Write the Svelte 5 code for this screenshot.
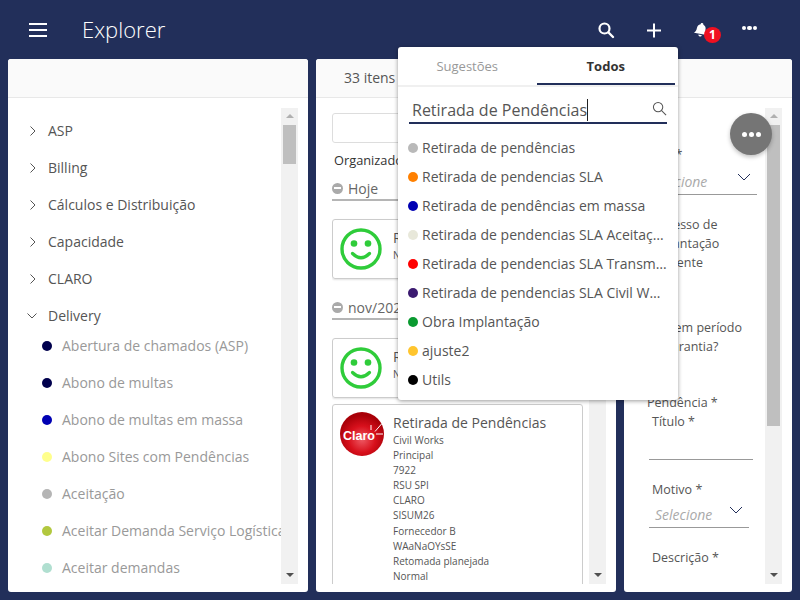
<script>
	const groups = ['ASP', 'Billing', 'Cálculos e Distribuição', 'Capacidade', 'CLARO'];
	const delivery = [
		{ name: 'Abertura de chamados (ASP)', color: '#00004d' },
		{ name: 'Abono de multas', color: '#00004d' },
		{ name: 'Abono de multas em massa', color: '#0000b3' },
		{ name: 'Abono Sites com Pendências', color: '#ffff8c' },
		{ name: 'Aceitação', color: '#b5b5b5' },
		{ name: 'Aceitar Demanda Serviço Logística', color: '#b2c83f' },
		{ name: 'Aceitar demandas', color: '#b0dfd0' }
	];
	const results = [
		{ name: 'Retirada de pendências', color: '#b9b9b9' },
		{ name: 'Retirada de pendencias SLA', color: '#ff8000' },
		{ name: 'Retirada de pendências em massa', color: '#0000b3' },
		{ name: 'Retirada de pendencias SLA Aceitação', color: '#e8e8da' },
		{ name: 'Retirada de pendencias SLA Transmissão', color: '#ff0000' },
		{ name: 'Retirada de pendencias SLA Civil Works', color: '#3b1a70' },
		{ name: 'Obra Implantação', color: '#0a9a30' },
		{ name: 'ajuste2', color: '#ffc52e' },
		{ name: 'Utils', color: '#000000' }
	];
	const details = ['Civil Works', 'Principal', '7922', 'RSU SPI', 'CLARO', 'SISUM26', 'Fornecedor B', 'WAaNaOYsSE', 'Retomada planejada', 'Normal'];
</script>

{#snippet scrollbar(thumb)}
	<div class="scrollbar">
		<div class="arrow up"></div>
		<div class="thumb" style="height: {thumb}px"></div>
		<div class="arrow down"></div>
	</div>
{/snippet}

{#snippet smiley()}
	<svg class="avatar" viewBox="0 0 42 42" width="42" height="42">
		<circle cx="21" cy="21" r="19" fill="none" stroke="#2fcc3a" stroke-width="3.4" />
		<circle cx="14" cy="15.5" r="3.3" fill="#2fcc3a" />
		<circle cx="28" cy="15.5" r="3.3" fill="#2fcc3a" />
		<path d="M12.5 25.5 Q21 34 29.5 25.5" fill="none" stroke="#2fcc3a" stroke-width="3.2" stroke-linecap="round" />
	</svg>
{/snippet}

{#snippet chevron()}
	<svg class="chevron" viewBox="0 0 14 8" width="14" height="8">
		<path d="M1 1 L7 7 L13 1" fill="none" stroke="#222f5a" stroke-width="1" />
	</svg>
{/snippet}

<div class="app">
	<header class="topbar">
		<button class="menu" aria-label="Menu">
			<span></span><span></span><span></span>
		</button>
		<h1>Explorer</h1>
		<div class="actions">
			<svg viewBox="0 0 18 18" width="18" height="18">
				<circle cx="7.5" cy="7.5" r="5" fill="none" stroke="#fff" stroke-width="2.2" />
				<path d="M11.5 11.5 L16 16" stroke="#fff" stroke-width="2.4" stroke-linecap="round" />
			</svg>
			<svg viewBox="0 0 18 18" width="18" height="18">
				<path d="M9 2.5 V16.5 M2 9.5 H16" stroke="#fff" stroke-width="2" />
			</svg>
			<div class="bell">
				<svg class="bell-icon" viewBox="0 0 16 18" width="14" height="16">
					<path d="M8 1 C9 1 9.6 1.7 9.6 2.5 C12 3.2 13 5.2 13 7.5 C13 10.5 14 12 15.4 13.4 L0.6 13.4 C2 12 3 10.5 3 7.5 C3 5.2 4 3.2 6.4 2.5 C6.4 1.7 7 1 8 1 Z M6 14.6 H10 C10 15.8 9 16.6 8 16.6 C7 16.6 6 15.8 6 14.6 Z" fill="#fff" />
				</svg>
				<span class="badge">1</span>
			</div>
			<div class="dots"><i></i><i></i><i></i></div>
		</div>
	</header>

	<main class="panels">
		<section class="panel left">
			<div class="panel-head"></div>
			<div class="panel-body">
				<div class="tree">
					{#each groups as group}
						<div class="group">
							<svg viewBox="0 0 8 12" width="8" height="12"><path d="M1.5 1.5 L6 6 L1.5 10.5" fill="none" stroke="#555" /></svg>
							{group}
						</div>
					{/each}
					<div class="group open">
						<svg viewBox="0 0 12 8" width="12" height="8"><path d="M1.5 1.5 L6 6 L10.5 1.5" fill="none" stroke="#555" /></svg>
						Delivery
					</div>
					{#each delivery as item}
						<div class="leaf">
							<span class="dot" style="background: {item.color}"></span>
							{item.name}
						</div>
					{/each}
				</div>
				{@render scrollbar(39)}
			</div>
		</section>

		<section class="panel middle">
			<div class="panel-head count">33 itens</div>
			<div class="panel-body">
				<div class="list">
					<div class="filter"></div>
					<div class="sort">Organizado por data</div>
					<div class="date-head"><span class="minus"></span>Hoje</div>
					<article class="card short">
						{@render smiley()}
						<div class="card-text">
							<div class="title">Retirada de Pendências</div>
							<div class="line">Normal</div>
						</div>
					</article>
					<div class="date-head later"><span class="minus"></span>nov/2021</div>
					<article class="card short">
						{@render smiley()}
						<div class="card-text">
							<div class="title">Retirada de Pendências</div>
							<div class="line">Normal</div>
						</div>
					</article>
					<article class="card tall">
						<svg class="avatar" viewBox="0 0 44 44" width="44" height="44">
							<defs>
								<radialGradient id="claro" cx="50%" cy="62%" r="55%">
									<stop offset="0%" stop-color="#ee5a64" />
									<stop offset="55%" stop-color="#d8101c" />
									<stop offset="100%" stop-color="#a80008" />
								</radialGradient>
							</defs>
							<circle cx="22" cy="22" r="22" fill="url(#claro)" />
							<text x="3" y="27.5" class="claro">Claro</text>
							<path d="M31 13 V18 M41.5 12 L35 19.5 M36 22 H43" stroke="#fff" stroke-width="1" fill="none" />
						</svg>
						<div class="card-text">
							<div class="title">Retirada de Pendências</div>
							{#each details as line}
								<div class="line">{line}</div>
							{/each}
						</div>
					</article>
				</div>
				{@render scrollbar(0)}
			</div>
		</section>

		<section class="panel right">
			<div class="panel-head"></div>
			<div class="panel-body">
				<form class="form">
					<div class="label first">Tipo *</div>
					<div class="select wide"><em>Selecione</em>{@render chevron()}</div>
					<div class="label multi">Processo de<br />Implantação<br />Pendente</div>
					<div class="label warranty">Está em período<br />de garantia?</div>
					<div class="label pend">Pendência *</div>
					<div class="nested">
						<div class="label">Título *</div>
						<div class="input"></div>
						<div class="label motivo">Motivo *</div>
						<div class="select"><em>Selecione</em>{@render chevron()}</div>
						<div class="label descr">Descrição *</div>
					</div>
				</form>
				{@render scrollbar(301)}
			</div>
		</section>
	</main>

	<div class="popover">
		<div class="tabs">
			<div class="tab">Sugestões</div>
			<div class="tab active">Todos</div>
		</div>
		<div class="search">
			<span class="query">Retirada de Pendências</span>
			<svg viewBox="0 0 16 16" width="15" height="15">
				<circle cx="6.5" cy="6.5" r="5" fill="none" stroke="#555" stroke-width="1.1" />
				<path d="M10 10 L15 15" stroke="#555" stroke-width="1.1" />
			</svg>
		</div>
		<ul class="results">
			{#each results as item}
				<li>
					<span class="dot" style="background: {item.color}"></span>
					<span class="result-name">{item.name}</span>
				</li>
			{/each}
		</ul>
	</div>

	<button class="fab" aria-label="Mais opções">
		<span class="dots"><i></i><i></i><i></i></span>
	</button>
</div>

<style>
	:global(body) {
		margin: 0;
		background: #222f5a;
		font-family: 'Open Sans', sans-serif;
	}

	.app {
		position: relative;
		width: 800px;
		height: 600px;
		overflow: hidden;
		display: flex;
		flex-direction: column;
		background: #222f5a;
	}

	.topbar {
		height: 59px;
		flex: none;
		display: flex;
		align-items: center;
		padding-left: 29px;
		color: #fff;
	}

	.menu {
		width: 18px;
		display: flex;
		flex-direction: column;
		gap: 4px;
		padding: 0;
		background: none;
		border: none;
	}

	.menu span {
		display: block;
		height: 2px;
		background: #fff;
	}

	h1 {
		margin: 0 0 2px 35px;
		font-size: 22px;
		font-weight: 300;
		line-height: 1;
	}

	.actions {
		margin-left: auto;
		padding-right: 43px;
		display: flex;
		align-items: center;
		gap: 30px;
	}

	.bell {
		position: relative;
		display: flex;
		margin: 0 4px 0 1px;
	}

	.bell-icon {
		transform: rotate(10deg);
	}

	.badge {
		position: absolute;
		left: 10px;
		top: 5px;
		width: 17px;
		height: 16px;
		border-radius: 50%;
		background: #f01020;
		color: #fff;
		font-size: 12px;
		font-weight: 700;
		line-height: 16px;
		text-align: center;
	}

	.dots {
		display: flex;
		gap: 1px;
	}

	.dots i {
		width: 4.4px;
		height: 4.4px;
		border-radius: 50%;
		background: #fff;
	}

	.actions .dots {
		margin-top: -3px;
	}

	.panels {
		flex: 1;
		min-height: 0;
		display: flex;
		gap: 8px;
		padding: 0 8px 8px;
	}

	.panel {
		width: 300px;
		background: #fff;
		border-radius: 3px;
		display: flex;
		flex-direction: column;
		overflow: hidden;
	}

	.panel.right {
		width: 168px;
	}

	.panel-head {
		height: 38px;
		flex: none;
		background: #fafafa;
		border-bottom: 1px solid #e8e8e8;
	}

	.count {
		padding-left: 28px;
		font-size: 14px;
		line-height: 37px;
		color: #555;
	}

	.panel-body {
		flex: 1;
		min-height: 0;
		display: flex;
		justify-content: space-between;
		padding: 10px 10px 8px 16px;
	}

	.scrollbar {
		width: 17px;
		flex: none;
		display: flex;
		flex-direction: column;
		align-items: center;
		background: #f1f1f1;
		position: relative;
	}

	.arrow {
		width: 0;
		height: 0;
		border-left: 4px solid transparent;
		border-right: 4px solid transparent;
	}

	.arrow.up {
		margin: 6px 0 7px;
		border-bottom: 4px solid #b0b0b0;
	}

	.arrow.down {
		position: absolute;
		bottom: 7px;
		border-top: 4px solid #505050;
	}

	.thumb {
		width: 13px;
		background: #bfbfbf;
		flex: none;
	}

	.tree {
		flex: 1;
		min-width: 0;
		overflow: hidden;
		white-space: nowrap;
		padding-top: 4px;
		font-size: 14px;
	}

	.group {
		height: 37px;
		display: flex;
		align-items: center;
		gap: 11px;
		padding-left: 5px;
		color: #555;
	}

	.group.open {
		padding-left: 2px;
		gap: 10px;
		height: 23px;
		margin-top: 7px;
	}

	.leaf {
		height: 37px;
		display: flex;
		align-items: center;
		gap: 10px;
		padding-left: 18px;
		color: #999;
	}

	.dot {
		width: 10px;
		height: 10px;
		border-radius: 50%;
		flex: none;
	}

	.list {
		width: 251px;
		flex: none;
		overflow: hidden;
		font-size: 14px;
		color: #555;
	}

	.filter {
		height: 28px;
		margin-top: 5px;
		border: 1px solid #ddd;
		border-radius: 3px;
	}

	.sort {
		margin-top: 10px;
		padding-left: 2px;
		font-size: 12.8px;
		line-height: 15px;
		color: #333;
	}

	.date-head {
		margin-top: 9px;
		height: 22px;
		display: flex;
		align-items: center;
		gap: 5px;
		border-bottom: 2px solid #b5b5b5;
		color: #666;
	}

	.date-head.later {
		margin-top: 17px;
	}

	.minus {
		width: 11px;
		height: 11px;
		border-radius: 50%;
		background: #aaa;
		position: relative;
	}

	.minus::after {
		content: '';
		position: absolute;
		left: 2px;
		right: 2px;
		top: 4.5px;
		height: 2px;
		background: #fff;
	}

	.card {
		box-sizing: border-box;
		margin-top: 18px;
		display: flex;
		gap: 11px;
		padding: 8px 7px;
		border: 1px solid #ccc;
		border-radius: 3px;
		box-shadow: 0 1px 2px rgba(0, 0, 0, 0.12);
	}

	.card.short {
		height: 60px;
	}

	.card.tall {
		margin-top: 6px;
		height: 240px;
		gap: 9px;
	}

	.card.tall .avatar {
		margin-top: -1px;
	}

	.avatar {
		flex: none;
	}

	.claro {
		font-family: 'Liberation Sans', sans-serif;
		font-size: 12.5px;
		font-weight: 700;
		fill: #fff;
	}

	.card-text {
		min-width: 0;
		white-space: nowrap;
	}

	.title {
		font-size: 14px;
		line-height: 20px;
		color: #555;
	}

	.line {
		font-size: 10px;
		line-height: 15.1px;
		color: #555;
	}

	.form {
		flex: 1;
		min-width: 0;
		padding-left: 7px;
		font-size: 12.5px;
		color: #555;
		white-space: nowrap;
	}

	.label {
		line-height: 19px;
	}

	.label.first {
		margin-top: 37px;
	}

	.select {
		box-sizing: border-box;
		width: 100px;
		height: 29px;
		margin-left: -3px;
		display: flex;
		align-items: flex-end;
		border-bottom: 1px solid #999;
		padding: 0 6px 3px;
		font-size: 14px;
		position: relative;
	}

	.select.wide {
		width: 110px;
		height: 31px;
		margin-left: 0;
		padding-left: 3px;
	}

	.select em {
		color: #aaa;
	}

	.chevron {
		position: absolute;
		right: 6px;
		top: 7px;
	}

	.select.wide .chevron {
		top: 9px;
	}

	.label.multi {
		margin-top: 20px;
	}

	.label.warranty {
		margin-top: 46px;
	}

	.label.pend {
		margin-top: 37px;
	}

	.nested {
		padding-left: 5px;
	}

	.input {
		box-sizing: border-box;
		width: 104px;
		height: 29px;
		margin-left: -3px;
		border-bottom: 1px solid #999;
	}

	.label.motivo {
		margin-top: 20px;
	}

	.label.descr {
		margin-top: 20px;
	}

	.popover {
		position: absolute;
		left: 398px;
		top: 47px;
		width: 280px;
		height: 353px;
		background: #fff;
		border-radius: 3px;
		box-shadow: 0 1px 4px rgba(0, 0, 0, 0.4);
	}

	.tabs {
		display: flex;
		height: 38px;
		padding-right: 3px;
		border-bottom: 2px solid #f0f0f0;
	}

	.tab {
		flex: 1;
		text-align: center;
		font-size: 13px;
		line-height: 38px;
		color: #999;
	}

	.tab.active {
		color: #333;
		font-weight: 700;
		border-bottom: 2px solid #222f5a;
		height: 36px;
		line-height: 38px;
	}

	.search {
		margin: 12px 11px 0;
		height: 23px;
		display: flex;
		align-items: flex-start;
		justify-content: space-between;
		border-bottom: 2px solid #222f5a;
		padding: 0 0 0 3px;
	}

	.query {
		font-size: 16px;
		line-height: 22px;
		color: #555;
		border-right: 1px solid #222;
		height: 22px;
	}

	.search svg {
		margin-top: 2px;
	}

	.results {
		list-style: none;
		margin: 9px 0 0;
		padding: 0 10px;
	}

	.results li {
		height: 29px;
		display: flex;
		align-items: center;
		gap: 4px;
		font-size: 14px;
		color: #555;
	}

	.result-name {
		min-width: 0;
		overflow: hidden;
		white-space: nowrap;
		text-overflow: ellipsis;
	}

	.fab {
		position: absolute;
		left: 730px;
		top: 113px;
		width: 42px;
		height: 42px;
		padding: 0;
		border: none;
		border-radius: 50%;
		background: #757575;
		box-shadow: 0 2px 4px rgba(0, 0, 0, 0.25);
		display: flex;
		align-items: center;
		justify-content: center;
	}

	.fab .dots {
		gap: 2px;
	}

	.fab .dots i {
		width: 5px;
		height: 5px;
	}
</style>
